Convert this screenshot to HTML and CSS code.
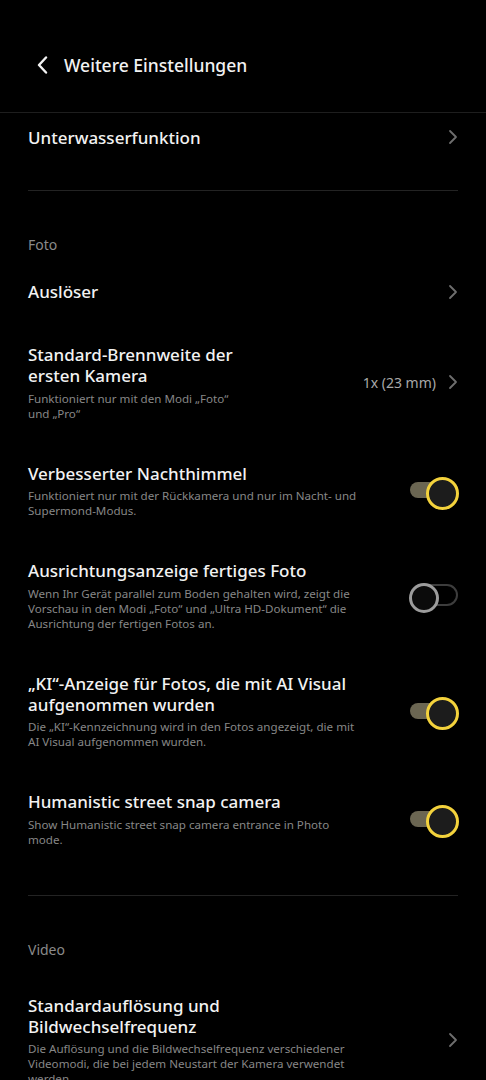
FILE: index.html
```html
<!DOCTYPE html>
<html lang="de">
<head>
  <meta charset="UTF-8">
  <meta name="viewport" content="width=device-width, initial-scale=1.0">
  <title>Weitere Einstellungen</title>
  <link rel="stylesheet" href="styles.css">
</head>
<body>
  <header class="top-bar">
    <svg class="back" width="14" height="18" viewBox="0 0 14 18">
      <path d="M10 1.5 L3 9 L10 16.5" />
    </svg>
    <h1>Weitere Einstellungen</h1>
  </header>

  <main class="settings">
    <div class="row row-single">
      <div class="row-text">
        <div class="title">Unterwasserfunktion</div>
      </div>
      <svg class="chevron" width="10" height="16" viewBox="0 0 10 16"><path d="M2 2 L8 8 L2 14" /></svg>
    </div>

    <hr class="divider">

    <div class="group-label">Foto</div>

    <div class="row">
      <div class="row-text">
        <div class="title">Auslöser</div>
      </div>
      <svg class="chevron" width="10" height="16" viewBox="0 0 10 16"><path d="M2 2 L8 8 L2 14" /></svg>
    </div>

    <div class="row">
      <div class="row-text narrow">
        <div class="title">Standard-Brennweite der ersten Kamera</div>
        <div class="sub">Funktioniert nur mit den Modi „Foto“ und „Pro“</div>
      </div>
      <span class="value">1x (23 mm)</span>
      <svg class="chevron" width="10" height="16" viewBox="0 0 10 16"><path d="M2 2 L8 8 L2 14" /></svg>
    </div>

    <div class="row">
      <div class="row-text">
        <div class="title">Verbesserter Nachthimmel</div>
        <div class="sub">Funktioniert nur mit der Rückkamera und nur im Nacht- und Supermond-Modus.</div>
      </div>
      <span class="switch on"></span>
    </div>

    <div class="row">
      <div class="row-text">
        <div class="title">Ausrichtungsanzeige fertiges Foto</div>
        <div class="sub">Wenn Ihr Gerät parallel zum Boden gehalten wird, zeigt die Vorschau in den Modi „Foto“ und „Ultra HD-Dokument“ die Ausrichtung der fertigen Fotos an.</div>
      </div>
      <span class="switch"></span>
    </div>

    <div class="row">
      <div class="row-text">
        <div class="title">„KI“-Anzeige für Fotos, die mit AI Visual aufgenommen wurden</div>
        <div class="sub">Die „KI“-Kennzeichnung wird in den Fotos angezeigt, die mit AI Visual aufgenommen wurden.</div>
      </div>
      <span class="switch on"></span>
    </div>

    <div class="row">
      <div class="row-text">
        <div class="title">Humanistic street snap camera</div>
        <div class="sub">Show Humanistic street snap camera entrance in Photo mode.</div>
      </div>
      <span class="switch on"></span>
    </div>

    <hr class="divider">

    <div class="group-label video">Video</div>

    <div class="row">
      <div class="row-text">
        <div class="title">Standardauflösung und Bildwechselfrequenz</div>
        <div class="sub">Die Auflösung und die Bildwechselfrequenz verschiedener Videomodi, die bei jedem Neustart der Kamera verwendet werden.</div>
      </div>
      <svg class="chevron" width="10" height="16" viewBox="0 0 10 16"><path d="M2 2 L8 8 L2 14" /></svg>
    </div>
  </main>
</body>
</html>
```

FILE: styles.css
```css
* {
  box-sizing: border-box;
  margin: 0;
  padding: 0;
}

body {
  background: #000;
  color: #f2f2f2;
  font-family: "Noto Sans", "Open Sans", sans-serif;
  height: 1080px;
  overflow: hidden;
}

/* Header */
.top-bar {
  height: 113px;
  padding: 17px 0 0 36px;
  display: flex;
  align-items: center;
  gap: 14px;
  border-bottom: 1px solid #1e1e1e;
}

.back path {
  fill: none;
  stroke: #f2f2f2;
  stroke-width: 2.4;
  stroke-linecap: round;
  stroke-linejoin: round;
}

.top-bar h1 {
  font-size: 17.5px;
  font-weight: 500;
  line-height: 24px;
}

/* List */
.settings {
  padding: 0 28px;
}

.row {
  display: flex;
  align-items: center;
  gap: 12px;
  padding: 21px 0;
}

.row-single {
  padding: 13.5px 0 42.5px;
}

.row-text {
  flex: 1;
}

.row-text > * {
  max-width: 334px;
}

.row-text.narrow .title {
  max-width: 240px;
}

.row-text.narrow .sub {
  max-width: 215px;
}

.title {
  font-size: 17px;
  font-weight: 500;
  line-height: 21px;
}

.sub {
  margin-top: 4.5px;
  font-size: 11.6px;
  line-height: 15px;
  color: #878787;
}

.value {
  font-size: 14px;
  color: #a8a8a8;
  white-space: nowrap;
}

.chevron path {
  fill: none;
  stroke: #6e6e6e;
  stroke-width: 1.8;
  stroke-linecap: round;
  stroke-linejoin: round;
}

.divider {
  border: none;
  border-top: 1px solid #232323;
  margin-bottom: 44px;
}

.row + .divider {
  margin-top: 27px;
}

.row-single + .divider {
  margin-top: 0;
}

.group-label {
  font-size: 14px;
  line-height: 20px;
  color: #8a8a8a;
  margin-bottom: 5px;
}

.group-label.video {
  margin-bottom: 14px;
}

/* Toggles */
.switch {
  position: relative;
  flex: none;
  width: 48px;
  height: 22px;
  border: 2px solid #3d3d3d;
  border-radius: 11px;
}

.switch::after {
  content: "";
  position: absolute;
  left: -3px;
  top: -3px;
  width: 24px;
  height: 24px;
  border: 3px solid #9c9c9c;
  border-radius: 50%;
  background: #0b0b0b;
}

.switch.on {
  height: 16px;
  border: none;
  border-radius: 8px;
  background: #6b6652;
}

.switch.on::after {
  left: auto;
  right: -1px;
  top: -5.5px;
  width: 27px;
  height: 27px;
  border-color: #f3d23c;
  background: #1c1c1c;
}
```
